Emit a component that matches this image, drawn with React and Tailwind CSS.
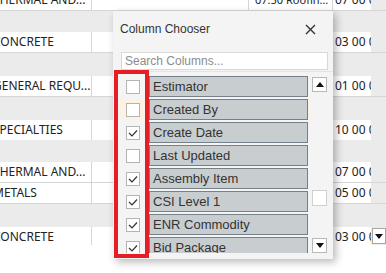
import React from "react";

const rows = [
  { kind: "white", h: 11, a: "THERMAL AND...", mid: "07.50 Roofing and...", y: "07 00 00", top: true },
  { kind: "gray", h: 21 },
  { kind: "white", h: 21, a: "CONCRETE", y: "03 00 00" },
  { kind: "gray", h: 23 },
  { kind: "white", h: 21, a: "GENERAL REQU...", y: "01 00 00" },
  { kind: "gray", h: 23 },
  { kind: "white", h: 20, a: "SPECIALTIES", y: "10 00 00" },
  { kind: "gray", h: 22 },
  { kind: "white", h: 21, a: "THERMAL AND...", y: "07 00 00" },
  { kind: "white", h: 21, a: "METALS", y: "05 00 00" },
  { kind: "gray", h: 23 },
  { kind: "white", h: 18, a: "CONCRETE", y: "03 00 00", drop: true },
];

const columns = [
  { name: "Estimator", checked: false },
  { name: "Created By", checked: false, hover: true },
  { name: "Create Date", checked: true },
  { name: "Last Updated", checked: false },
  { name: "Assembly Item", checked: true },
  { name: "CSI Level 1", checked: true },
  { name: "ENR Commodity", checked: true },
  { name: "Bid Package", checked: true },
];

function Caret({ up }) {
  return (
    <svg width="8" height="5" viewBox="0 0 8 5">
      <path d={up ? "M0 5 L4 0 L8 5 Z" : "M0 0 L8 0 L4 5 Z"} fill="#111" />
    </svg>
  );
}

function GridRow({ row }) {
  if (row.kind === "gray") {
    return <div className="bg-[#ebebeb]" style={{ height: row.h }} />;
  }
  const inner = (
    <div className="flex h-[21px] border-b border-[#d6d6d6] bg-white">
      <div className="w-[92px] shrink-0 overflow-hidden border-r border-[#d6d6d6] flex items-center">
        <span className="-ml-[7px] whitespace-nowrap">{row.a}</span>
      </div>
      <div className="w-[157px] shrink-0 border-r border-[#d6d6d6]" />
      <div className="w-[84px] shrink-0 overflow-hidden border-r border-[#d6d6d6] flex items-center pl-[6px] pr-[2px]">
        <span className="block min-w-0 truncate text-[11px]">{row.mid}</span>
      </div>
      <div className="w-[38px] shrink-0 overflow-hidden flex items-center pl-[2px]">
        <span className="block min-w-0 overflow-hidden whitespace-nowrap">{row.y}</span>
      </div>
      <div className="flex-1 bg-[#ebebeb] flex items-start pt-[1px] pl-[1px]">
        {row.drop && (
          <div className="w-[14px] h-[16px] bg-white border border-[#a8a8a8] flex items-center justify-center">
            <Caret />
          </div>
        )}
      </div>
    </div>
  );
  if (row.top) {
    return (
      <div className="h-[11px] overflow-hidden">
        <div className="-mt-[10px]">{inner}</div>
      </div>
    );
  }
  return (
    <div className="overflow-hidden" style={{ height: row.h }}>
      {inner}
    </div>
  );
}

function Check({ checked }) {
  return (
    <div className="w-[14px] h-[14px] bg-white border border-[#b4b4b4] flex items-center justify-center">
      {checked && (
        <svg width="12" height="12" viewBox="0 0 12 12">
          <path d="M2 6 L5 9 L10 3.5" fill="none" stroke="#333" strokeWidth="1.2" />
        </svg>
      )}
    </div>
  );
}

export default function App() {
  return (
    <div className="relative w-[386px] h-[273px] overflow-hidden bg-white text-[12px] text-[#222] font-['Noto_Sans',sans-serif]">
      <div className="flex flex-col">
        {rows.map((r, i) => (
          <GridRow key={i} row={r} />
        ))}
      </div>

      {/* column chooser popup */}
      <div className="absolute left-[113px] top-[11px] w-[220px] h-[248px] bg-[#f4f4f4] shadow-[3px_3px_8px_rgba(0,0,0,0.28)] flex flex-col font-['Liberation_Sans',sans-serif]">
        <div className="h-[36px] flex items-center justify-between pl-[7px] pr-[17px]">
          <span className="text-[12px] text-[#333]">Column Chooser</span>
          <svg width="11" height="11" viewBox="0 0 11 11">
            <path d="M1 1 L10 10 M10 1 L1 10" stroke="#333" strokeWidth="1.4" />
          </svg>
        </div>
        <div className="mt-[5px] ml-[8px] mr-[5px] h-[18px] bg-white border border-[#d8d8d8] flex items-center pl-[3px] text-[12px] text-[#8c8c8c]">
          Search Columns...
        </div>
        <div className="mt-[1px] h-[182px] flex border-t border-[#e4e4e4] bg-[#f4f4f4]">
          <div className="ml-[7px] w-[189px] overflow-hidden pt-[4px] flex flex-col gap-[2px]">
            {columns.map((c) => (
              <div
                key={c.name}
                className={`h-[21px] shrink-0 flex ${c.hover ? "bg-[#fdf1e1]" : ""}`}
              >
                <div className="w-[29px] shrink-0 flex items-center pl-[6px]">
                  <Check checked={c.checked} />
                </div>
                <div className="w-[159px] shrink-0 bg-[#c8cdd0] border border-[#75818a] flex items-center pl-[3px] pt-[1px] text-[13px] text-[#333]">
                  {c.name}
                </div>
              </div>
            ))}
          </div>
          <div className="ml-[3px] w-[15px] flex flex-col pt-[5px]">
            <div className="h-[15px] bg-white border border-[#b8b8b8] flex items-center justify-center">
              <Caret up />
            </div>
            <div className="mt-[98px] h-[16px] bg-white border border-[#d0d0d0]" />
            <div className="mt-[32px] h-[15px] bg-white border border-[#b8b8b8] flex items-center justify-center">
              <Caret />
            </div>
          </div>
        </div>
      </div>

      {/* highlight frame */}
      <div className="absolute left-[114px] top-[70px] w-[35px] h-[188px] border-[4px] border-[#e51d25]" />
    </div>
  );
}
